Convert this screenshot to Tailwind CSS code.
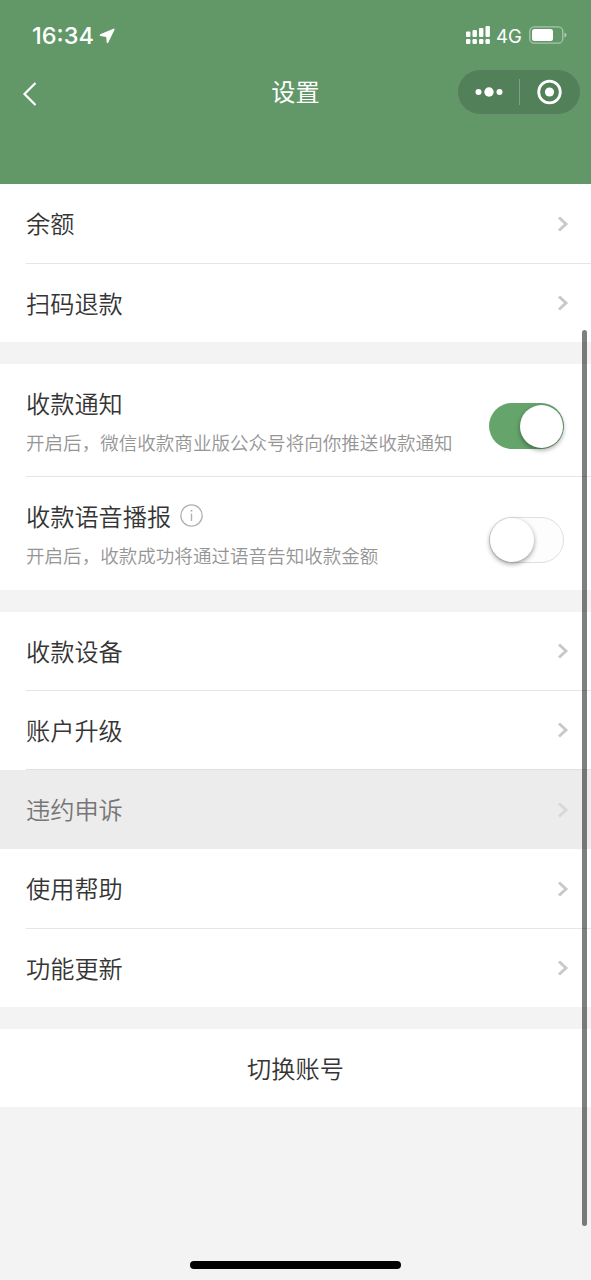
<!DOCTYPE html>
<html lang="zh-CN">
<head>
<meta charset="utf-8">
<title>设置</title>
<script src="https://cdn.jsdelivr.net/npm/@tailwindcss/browser@4"></script>
</head>
<body class="relative h-[1280px] w-[591px] overflow-hidden bg-[#f3f3f3] font-['Noto_Sans_CJK_SC',sans-serif] text-[24.2px] font-[350] leading-9 text-[#353535]">
<svg class="hidden"><symbol id="chev" viewBox="0 0 12 18"><path d="M2 2.500 9 9l-7 6.500" fill="none" stroke="currentColor" stroke-width="2.900"/></symbol></svg>

<header class="h-[184px] bg-[#629868] text-white">
  <div class="flex h-[70px] items-center justify-between pl-8 pr-6">
    <div class="flex items-center gap-1 pt-px">
      <span class="w-[63px] font-['Inter',sans-serif] text-[23.500px] font-medium leading-7">16:34</span>
      <svg class="h-[18px] w-[18px]" viewBox="0 0 18 18"><path d="M1.200 7.200 14.400 1.700q1.600-.4 1 1.200L9.300 15.600q-.9 1.300-1.600-.2L7.200 10 1.500 8.900q-1.500-.7-.3-1.700z" fill="#fff"/></svg>
    </div>
    <div class="flex items-center">
      <svg class="h-5 w-[26px]" viewBox="0 0 26 20" fill="#fff"><rect x="0" y="6.500" width="4.400" height="5.500" rx="1"/><rect x="6.500" y="5" width="4.400" height="7" rx="1"/><rect x="13" y="3" width="4.400" height="9" rx="1"/><rect x="19.500" y="1" width="4.400" height="11" rx="1"/><rect x="0" y="14" width="4.400" height="5" rx="1.200"/><rect x="6.500" y="14" width="4.400" height="5" rx="1.200"/><rect x="13" y="14" width="4.400" height="5" rx="1.200"/><rect x="19.500" y="14" width="4.400" height="5" rx="1.200"/></svg>
      <span class="ml-[4px] mt-0.5 w-[28px] font-['Inter',sans-serif] text-[18.500px] font-normal leading-6">4G</span>
      <svg class="ml-[5px] h-[18px] w-[38px]" viewBox="0 0 38 18"><rect x=".8" y=".8" width="33" height="16.400" rx="4.500" fill="none" stroke="#fff" stroke-opacity=".45" stroke-width="1.300"/><rect x="3" y="3" width="21" height="12" rx="2.500" fill="#fff"/><path d="M35.500 6.500q2 .7 2 2.500t-2 2.500z" fill="#fff" fill-opacity=".5"/></svg>
    </div>
  </div>
  <div class="-mt-px grid h-[43px] grid-cols-[1fr_auto_1fr] items-center pl-[21px] pr-[10px]">
    <svg class="mt-1 h-7 w-[18px]" viewBox="0 0 18 28"><path d="M14.500 3 3.500 14l11 11" fill="none" stroke="#fff" stroke-width="2.200"/></svg>
    <h1 class="-ml-[11px] -mt-0.5 font-normal">设置</h1>
    <div class="flex h-[46px] w-[124px] items-center justify-self-end rounded-full border border-white/15 bg-[#528058]">
      <svg class="h-5 w-[61px]" viewBox="0 0 61 20" fill="#fff"><circle cx="20.500" cy="10" r="3"/><circle cx="31" cy="10" r="4.700"/><circle cx="41.500" cy="10" r="3"/></svg>
      <span class="h-[26px] w-px bg-white/25"></span>
      <svg class="h-7 w-[59px]" viewBox="0 0 59 28"><circle cx="29.500" cy="14" r="10.800" fill="none" stroke="#fff" stroke-width="2.800"/><circle cx="29.500" cy="14" r="4.600" fill="#fff"/></svg>
    </div>
  </div>
</header>

<main>
  <section class="bg-white">
    <div class="ml-[26px] flex h-20 items-center justify-between border-b border-[#e5e5e5] pr-[22px]"><span class="-mt-px">余额</span><svg class="h-[18px] w-3 text-[#c8c8cc]"><use href="#chev"/></svg></div>
    <div class="ml-[26px] flex h-[78px] items-center justify-between pr-[22px]"><span>扫码退款</span><svg class="h-[18px] w-3 text-[#c8c8cc]"><use href="#chev"/></svg></div>
  </section>

  <section class="mt-[22px] bg-white">
    <div class="ml-[26px] flex h-[113px] items-center justify-between border-b border-[#e5e5e5] pr-[27px]">
      <div>
        <p>收款通知</p>
        <p class="mt-[7px] text-[18.560px] leading-7 text-[#959595]">开启后，微信收款商业版公众号将向你推送收款通知</p>
      </div>
      <span class="mt-3 flex h-[46px] w-[75px] justify-end rounded-full bg-[#65a56c] p-[1.500px]"><span class="size-[43px] rounded-full bg-white shadow-[0_2px_5px_rgba(0,0,0,0.4)]"></span></span>
    </div>
    <div class="ml-[26px] flex h-[113px] items-center justify-between pr-[27px]">
      <div>
        <p class="flex items-center gap-[9px]">收款语音播报 <svg class="h-6 w-6" viewBox="0 0 24 24"><circle cx="11.500" cy="11.500" r="10.700" fill="none" stroke="#b2b2b2" stroke-width="1.300"/><circle cx="11.500" cy="6.800" r="1" fill="#b2b2b2"/><path d="M11.500 9.500V17" stroke="#b2b2b2" stroke-width="1.400"/></svg></p>
        <p class="mt-[7px] text-[18.560px] leading-7 text-[#959595]">开启后，收款成功将通过语音告知收款金额</p>
      </div>
      <span class="mt-3 flex h-[46px] w-[75px] rounded-full border-[1.500px] border-[#dfdfdf] bg-[#fdfdfd]"><span class="h-11 w-11 rounded-full bg-white shadow-[0_2px_5px_rgba(0,0,0,0.4)]"></span></span>
    </div>
  </section>

  <section class="mt-[22px] bg-white">
    <div class="ml-[26px] flex h-[79px] items-center justify-between border-b border-[#e5e5e5] pr-[22px]"><span>收款设备</span><svg class="h-[18px] w-3 text-[#c8c8cc]"><use href="#chev"/></svg></div>
    <div class="ml-[26px] flex h-[79px] items-center justify-between border-b border-[#e0e0e0] pr-[22px]"><span>账户升级</span><svg class="h-[18px] w-3 text-[#c8c8cc]"><use href="#chev"/></svg></div>
    <div class="flex h-[79px] items-center justify-between bg-[#ececec] pl-[26px] pr-[22px] text-[#767676]"><span class="-mt-px">违约申诉</span><svg class="h-[18px] w-3 text-[#d8d8da]"><use href="#chev"/></svg></div>
    <div class="ml-[26px] flex h-20 items-center justify-between border-b border-[#e5e5e5] pr-[22px]"><span class="-mt-px">使用帮助</span><svg class="h-[18px] w-3 text-[#c8c8cc]"><use href="#chev"/></svg></div>
    <div class="ml-[26px] flex h-[78px] items-center justify-between pr-[22px]"><span>功能更新</span><svg class="h-[18px] w-3 text-[#c8c8cc]"><use href="#chev"/></svg></div>
  </section>

  <button class="mt-[22px] flex h-[78px] w-full items-center justify-center bg-white">切换账号</button>
</main>

<div class="absolute left-[582px] top-[330px] h-[896px] w-[5px] rounded-full bg-black/50"></div>
<div class="absolute left-[190px] top-[1261px] h-[8px] w-[211px] rounded-full bg-black"></div>
</body>
</html>
